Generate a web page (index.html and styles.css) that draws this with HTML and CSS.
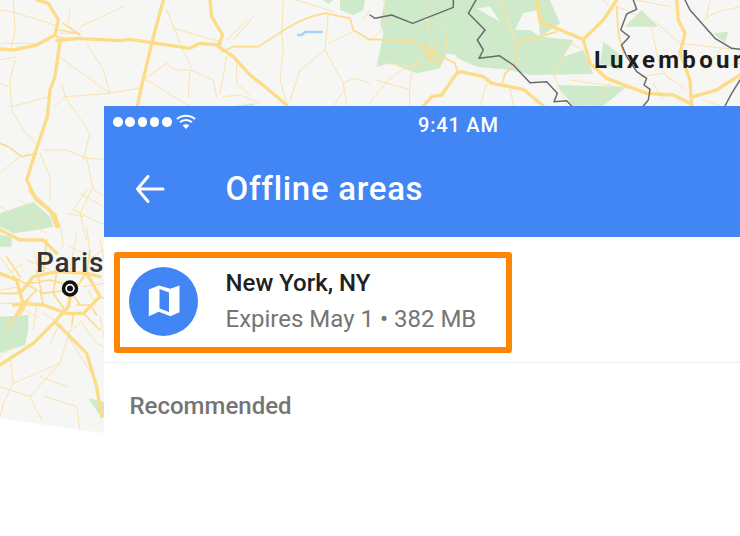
FILE: index.html
```
<!DOCTYPE html>
<html lang="en">
<head>
<meta charset="utf-8">
<title>Offline areas</title>
<link rel="stylesheet" href="styles.css">
</head>
<body>
<main class="stage">
  <svg class="map" width="740" height="536" viewBox="0 0 740 536" aria-hidden="true">
    <polygon class="land" points="0,0 740,0 740,433 104,433 80,430 0,418"/>
    <g transform="translate(370,0) scale(.33333)">
      <g class="park">
        <polygon points="45,0 250,0 250,20 130,70 30,70"/>
        <polygon points="30,70 170,60 250,0 540,0 570,70 510,110 610,120 580,170 640,150 670,222 480,225 420,210 320,200 230,160 210,205 140,220 60,190 20,200 40,100"/>
        <polygon points="560,255 770,260 700,318 610,318"/>
        <polygon points="700,125 745,160 750,210 690,190"/>
        <polygon points="765,80 815,30 865,80"/>
        <polygon points="1030,100 1075,95 1065,130"/>
      </g>
      <g class="hole">
        <polygon points="320,25 360,20 390,65"/>
        <polygon points="435,90 460,40 505,30 510,110 480,90"/>
        <polygon points="225,160 260,165 260,190"/>
      </g>
      <g class="minor">
        <path d="M0,118 C30,100 60,70 40,0 M120,318 C115,250 120,200 170,145 M170,0 L180,130 M330,318 L350,250 M420,260 L430,318 M395,0 L440,130 M740,20 C800,40 850,70 850,110 L870,200 L900,240 M590,318 L550,220 L610,120 M600,240 L780,265 M660,318 L730,240 M850,60 L930,130 M1000,60 C1040,30 1070,30 1110,20 M1000,210 L1060,140 M810,230 L880,220 L950,270 M225,60 L230,150 M0,310 C60,220 110,190 180,190 M930,130 L1110,150 M440,130 L380,0 M600,130 L640,150 M880,300 L850,250 M1000,300 L1050,318 M1060,200 L1110,190 M1020,0 L1010,50 M50,190 L130,200 M700,0 L720,20 M20,240 L120,270 M900,20 L800,0"/>
      </g>
      <g class="medium">
        <path d="M0,118 L120,122 L170,145 L255,190 L262,215"/>
        <path d="M440,130 L560,95 M440,130 L435,195 L405,220 L395,260"/>
        <path d="M740,20 L745,100 L760,160"/>
        <path d="M160,150 L215,190 M170,170 L205,195 M165,130 L180,170 M200,130 L180,175"/>
      </g>
      <g class="major">
        <path d="M500,0 L510,65 L640,118 L700,60 L740,0"/>
        <path d="M640,118 L660,190 L710,235 L830,280 L910,285 L960,310"/>
        <path d="M920,0 L925,60 L945,100 L930,160 L960,240 L965,318"/>
        <path d="M970,290 L1040,270 L1110,225"/>
        <path d="M160,318 L185,290 L215,285 L260,220 L272,215 L340,230 L365,250 L460,268 L520,318"/>
      </g>
      <g class="border">
        <path d="M0,45 L15,55 L65,45 L128,70 L250,22 L250,0"/>
        <path d="M318,0 L295,40 L345,90 L322,120 L340,150 L327,175 L388,167 L430,195 L480,248 L530,245 L562,280 L552,305 L590,302 L605,318"/>
        <path d="M790,0 L800,28 L770,42 L752,90 L778,110 L755,135 L770,170 L800,215 L830,235 L822,255 L840,268 L835,300 L820,318"/>
        <path d="M945,0 L960,30 L1035,115 L1085,145 L1110,148"/>
        <path d="M1110,240 L1085,280 L1065,318"/>
      </g>
    </g>
    <g transform="scale(.33333)">
      <polygon class="park" points="970,0 1000,0 985,12"/>
      <polygon class="park" points="1020,0 1095,0 1090,30 1060,45 1020,30"/>
      <polygon class="park" points="700,318 765,310 755,330 700,330"/>
      <path class="water" d="M895,105 H905 L915,96 H965"/>
      <g class="minor">
        <path d="M40,0 L45,90 L35,140 M0,30 L35,35 L165,75 M210,30 L205,70 M370,20 L240,80 M45,180 L30,240 L35,330 L70,390 L105,430 M0,250 L25,260 M35,320 L150,290 M185,250 L195,290 L270,400 L250,480 M195,290 L330,280 L415,265 M260,130 L310,210 L330,280 M170,165 L330,280 M440,240 L570,320 M500,190 L430,240 M500,190 L525,210 L570,210 L565,290 M570,210 L640,240 L650,290 M500,30 L540,130 L575,205 M520,85 L660,125 M850,0 L845,100 L850,150 L840,240 L860,310 M985,40 L975,150 L1030,250 L1040,318 M975,150 L900,210 L870,300 M985,130 L1060,95 M1030,250 L1060,235 L1110,250 M680,170 L660,280 M710,190 L710,250 L750,285 M670,290 L720,285 L780,310 M120,460 L150,530 L150,600 M130,450 L200,450 L260,475 L310,478 M260,475 L280,570 L310,585 M275,570 L240,640 L260,720 M200,640 L250,650 M0,180 L50,170 M180,100 L240,100 M760,50 L700,120 M0,520 L60,470 M0,130 L100,130 M890,0 L1000,35 M740,60 L680,120 M1090,60 L1110,30 M240,580 L310,620 M195,290 L165,320 M1040,260 L1000,318"/>
      </g>
      <g class="medium">
        <path d="M845,95 L775,140 L700,140 L665,155"/>
        <path d="M845,95 C890,65 930,45 980,40 L1050,55 L1060,90 L1110,120"/>
        <path d="M0,430 L25,440 L65,470 L110,460"/>
        <path d="M180,90 L230,100 M190,70 L240,105 M170,110 L220,120"/>
      </g>
      <g class="major">
        <path d="M110,0 L145,10 L175,60 L165,105 L110,135 L40,150 L0,147"/>
        <path d="M170,122 L230,115 L360,122 L390,118 L570,145 L600,130 L660,135"/>
        <path d="M490,0 L455,130 L420,280 L412,320"/>
        <path d="M180,125 L165,230 L150,270 L142,350 L105,460 L80,540 L105,590 L150,630 L170,680"/>
        <path d="M630,0 L635,50 L668,105 L655,140 L700,170 L750,225 L795,260 L860,315"/>
      </g>
    </g>
    <g transform="translate(0,190) scale(.33333)">
      <g class="park">
        <polygon points="0,70 100,35 150,80 160,110 110,120 40,130 0,110"/>
        <polygon points="0,135 35,140 35,170 0,170"/>
        <polygon points="0,380 85,375 85,420 75,465 0,490"/>
        <polygon points="265,625 312,635 312,680 295,670"/>
      </g>
      <g class="minor">
        <path d="M0,50 L140,130 M60,30 L150,110 M220,60 L260,0 M180,100 L190,170 M220,60 L300,100 L312,100 M260,110 L270,190 M0,590 L90,620 L125,690 M0,340 L40,340 M30,500 L40,580 L10,640 L0,680 M40,580 L180,520 L210,420 M90,620 L180,520 M135,620 L230,650 L240,720 M280,560 L180,400 L150,460 M300,380 L312,440 M240,390 L290,460 L312,470 M0,200 L50,270 M300,150 L312,210 M0,300 L60,290 M10,260 L70,220 M100,180 L120,250 M230,130 L210,240 M280,200 L312,180 M40,340 L110,380 M110,345 L100,420 M0,500 L40,470 M200,430 L240,400 M130,370 L170,395 M210,170 L300,210 M80,210 L150,240 M250,290 L312,280 M265,300 L290,350 M120,560 L200,590"/>
      </g>
      <g class="medium">
        <path d="M40,260 L110,300 L70,340 M110,240 L125,310 L210,300 L240,345 M170,245 L160,310 M250,260 L210,330 M0,310 L60,310 M300,320 L312,325 M250,370 L300,420 M220,370 L215,410 M20,200 L60,260 M270,180 L260,250 M50,370 L20,420 M90,280 L150,270 L230,290 L260,250 M130,345 L120,300 M160,310 L200,370 M85,330 L60,375 M230,345 L270,345 L290,375 M140,150 L130,245"/>
      </g>
      <g class="major">
        <path d="M90,0 L110,30 L165,75 L175,110"/>
        <path d="M0,525 L100,460 L165,395 L205,350 L210,320"/>
        <path d="M165,395 L260,490 L290,590 L305,680"/>
        <path d="M0,120 L60,150 L130,150 L170,190"/>
        <path d="M60,310 L100,260 L170,245 L260,250 L300,320 L250,370 L200,370 L130,345 L70,340 Z"/>
        <path d="M0,250 L50,270 L60,310 M300,260 L260,250 M40,345 L70,340 L50,375"/>
      </g>
    </g>
    <circle class="pin" cx="70" cy="288.500" r="6.500"/>
    <circle class="pin-dot" cx="70" cy="288.500" r="3"/>
  </svg>

  <span class="label label-paris">Paris</span>
  <span class="label label-lux">Luxembourg</span>

  <section class="panel">
    <header class="appbar">
      <div class="status">
        <div class="signal">
          <span class="dot"></span><span class="dot"></span><span class="dot"></span><span class="dot"></span><span class="dot"></span>
          <svg class="wifi" width="20" height="16" viewBox="0 0 20 16" aria-hidden="true">
            <path d="M1,5 C5.800,.600 14.200,.600 19,5 M4,8.300 C7.300,5.300 12.700,5.300 16,8.300"/>
            <path class="wifi-fan" d="M10,15 L6.600,11.300 C8.600,9.800 11.400,9.800 13.400,11.300 Z"/>
          </svg>
        </div>
        <span class="time">9:41 AM</span>
      </div>
      <div class="toolbar">
        <svg class="back" width="32" height="32" viewBox="0 0 32 32" aria-hidden="true">
          <path d="M29,16 H3.500 M14,3.500 L3.500,16 L14,28.500"/>
        </svg>
        <h1 class="title">Offline areas</h1>
      </div>
    </header>
    <div class="body">
      <div class="area-wrap">
        <div class="area">
          <div class="area-icon">
            <svg width="32" height="32" viewBox="147.500 285.500 32 32" aria-hidden="true">
              <path class="fold" fill-rule="evenodd" d="M148.300,290 L158.300,286 L170,289.300 L179,286 L179,312.700 L170,316.700 L158.300,312.300 L148.300,316.700 Z M159,289.500 L168.500,293 L168.500,312.500 L159,309 Z"/>
            </svg>
          </div>
          <div class="area-text">
            <div class="area-name">New York, NY</div>
            <div class="area-meta">Expires May 1 • 382 MB</div>
          </div>
        </div>
      </div>
      <h2 class="section">Recommended</h2>
    </div>
  </section>
</main>
</body>
</html>
```

FILE: styles.css
```
* { box-sizing: border-box; }
html, body { margin: 0; padding: 0; background: #fff; }
.stage {
  position: relative;
  width: 740px;
  height: 536px;
  overflow: hidden;
  padding: 106px 0 0 104px;
  font-family: Roboto, "Liberation Sans", sans-serif;
}
.map { position: absolute; left: 0; top: 0; }
.land { fill: #f6f6f5; }
.park polygon, polygon.park { fill: #cfeaca; }
.hole polygon { fill: #f6f6f5; }
.water { fill: none; stroke: #a9d3fa; stroke-width: 8; stroke-linecap: round; }
.minor path, .medium path, .major path, .border path {
  fill: none;
  stroke-linejoin: round;
  stroke-linecap: round;
}
.minor path { stroke: #fae3ab; stroke-width: 3; }
.medium path { stroke: #fcdb8d; stroke-width: 5; }
.major path { stroke: #fddc87; stroke-width: 10; }
.border path { stroke: #6b6b6b; stroke-width: 4.500; }
.pin { fill: #fff; stroke: #111; stroke-width: 3.500; }
.pin-dot { fill: #111; }

.label { position: absolute; white-space: nowrap; color: #333333; }
.label-paris { left: 36px; top: 248px; font-size: 28px; font-weight: 500; letter-spacing: .8px; line-height: 30px; }
.label-lux { left: 594px; top: 45px; font-size: 24px; font-weight: 700; letter-spacing: 3.300px; line-height: 30px; color: #1c1c1c; }

.panel { position: relative; width: 636px; height: 430px; }
.appbar { background: #4285f4; height: 131px; color: #fff; }
.status { position: relative; height: 38px; display: flex; align-items: center; padding-left: 314px; }
.signal { position: absolute; left: 9px; top: 8px; display: flex; align-items: center; gap: 2.800px; }
.dot { width: 9.500px; height: 9.500px; border-radius: 50%; background: #fff; }
.wifi { margin-left: 1.500px; }
.wifi path { fill: none; stroke: #fff; stroke-width: 2; }
.wifi .wifi-fan { fill: #fff; stroke: none; }
.time { font-size: 20px; font-weight: 500; letter-spacing: .8px; margin-top: -1px; }
.toolbar { display: flex; align-items: center; height: 93px; padding: 0 0 4px 30px; }
.back { flex: none; width: 32px; height: 32px; margin-right: 60px; }
.back path { fill: none; stroke: #fff; stroke-width: 3; stroke-linecap: round; stroke-linejoin: round; }
.title { margin: 0 0 0 -.5px; font-size: 33px; font-weight: 500; letter-spacing: .7px; line-height: 38px; color: #fff; }

.body { background: #fff; height: 299px; }
.area-wrap { border-bottom: 1px solid #eeeeee; height: 126px; padding: 15px 0 0 10px; }
.area {
  width: 398px;
  height: 101px;
  border: 6px solid #ff8505;
  border-radius: 3px;
  display: flex;
  align-items: center;
  padding: 0 0 3px 9px;
}
.area-icon {
  flex: none;
  width: 69px;
  height: 69px;
  border-radius: 50%;
  background: #4285f4;
  display: flex;
  align-items: center;
  justify-content: center;
  margin-right: 27.500px;
}
.fold { fill: #fff; }
.area-name { font-size: 24px; font-weight: 500; line-height: 28px; color: #212121; }
.area-meta { font-size: 24px; line-height: 28px; color: #757575; margin-top: 8px; }
.section { margin: 29px 0 0 25.500px; font-size: 24px; font-weight: 500; line-height: 28px; color: #757575; }
```
